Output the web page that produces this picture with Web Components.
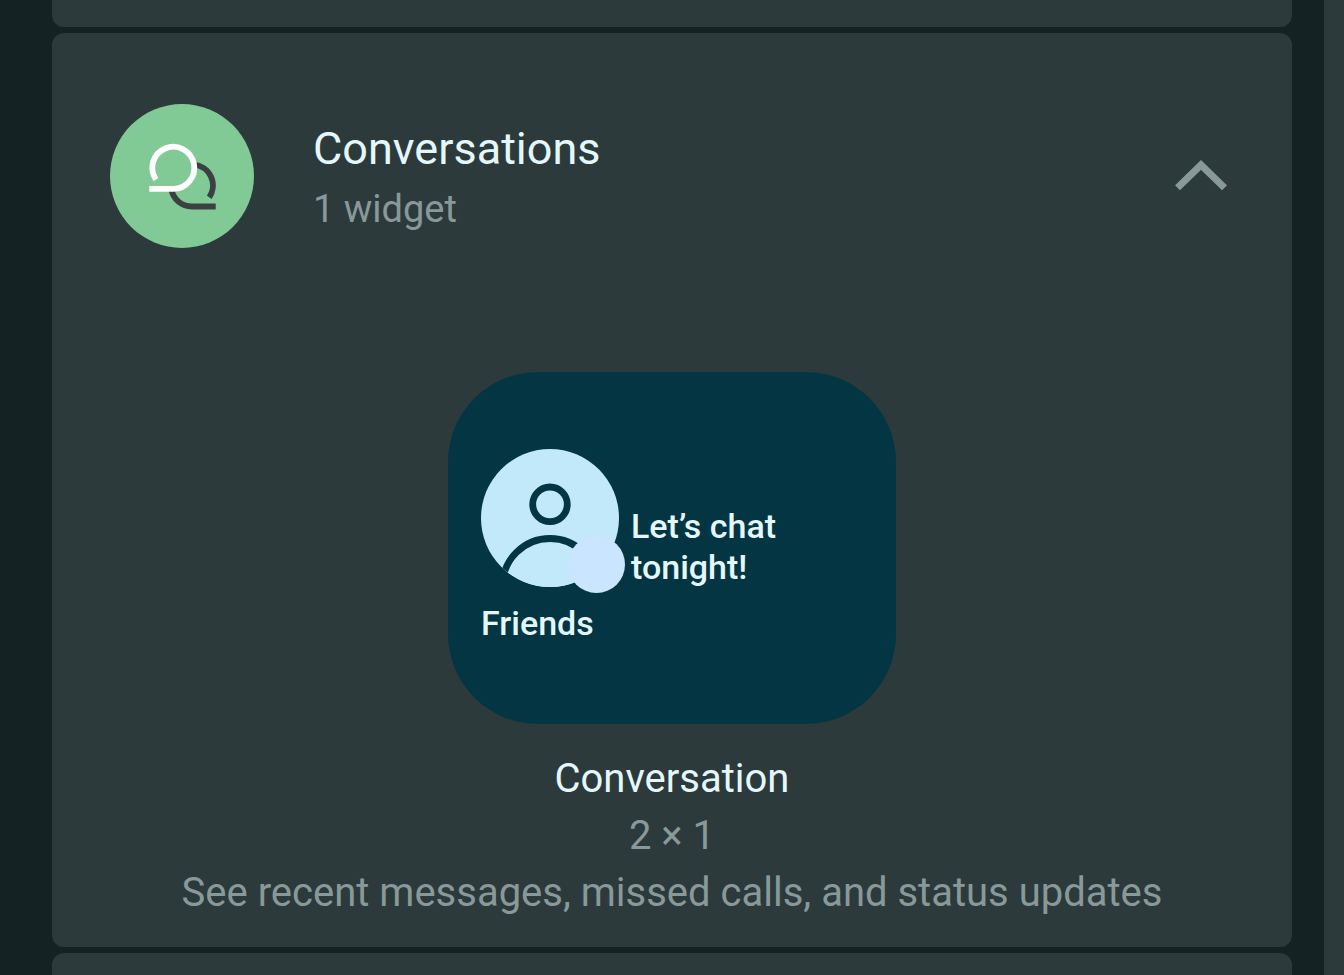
<!DOCTYPE html>
<html lang="en">
<head>
<meta charset="UTF-8">
<meta name="viewport" content="width=device-width, initial-scale=1">
<title>Widgets</title>
<style>
  :root {
    --page: #142224;
    --surface: #2d3a3c;
    --text: #e4f8fb;
    --muted: #879998;
    --widget: #043542;
  }
  body {
    margin: 0;
    background: var(--page);
    color: var(--text);
    font-family: Roboto, "Liberation Sans", sans-serif;
  }
</style>
</head>
<body>
<widget-picker>
  <app-card edge="bottom"></app-card>
  <app-card>
    <app-header name="Conversations" count="1 widget">
      <conversations-icon slot="icon"></conversations-icon>
    </app-header>
    <widget-option name="Conversation" size="2 × 1" description="See recent messages, missed calls, and status updates">
      <conversation-widget name="Friends">Let’s chat<br>tonight!</conversation-widget>
    </widget-option>
  </app-card>
  <app-card edge="top"></app-card>
</widget-picker>

<script>
class WidgetPicker extends HTMLElement {
  constructor() {
    super();
    this.attachShadow({ mode: 'open' });
    this.shadowRoot.innerHTML = `
      <style>
        :host {
          display: grid;
          grid-template-columns: 1fr 20px;
          min-height: 100vh;
        }
        main {
          display: flex;
          flex-direction: column;
          gap: 6px;
          padding: 0 32px 0 52px;
        }
        aside {
          background: var(--surface);
        }
      </style>
      <main><slot></slot></main>
      <aside></aside>
    `;
  }
}

class AppCard extends HTMLElement {
  constructor() {
    super();
    this.attachShadow({ mode: 'open' });
    this.shadowRoot.innerHTML = `
      <style>
        :host {
          display: block;
          box-sizing: border-box;
          padding: 71px 58px 26px;
          border-radius: 12px;
          background: var(--surface);
        }
        /* neighbours that are partly scrolled out of view */
        :host([edge]) {
          padding: 0;
        }
        :host([edge="bottom"]) {
          height: 27px;
          border-radius: 0 0 12px 12px;
        }
        :host([edge="top"]) {
          flex: 1;
          min-height: 20px;
          border-radius: 12px 12px 0 0;
        }
      </style>
      <slot></slot>
    `;
  }
}

class AppHeader extends HTMLElement {
  constructor() {
    super();
    this.attachShadow({ mode: 'open' });
  }

  connectedCallback() {
    this.shadowRoot.innerHTML = `
      <style>
        :host {
          display: flex;
          align-items: center;
          gap: 59px;
        }
        .titles {
          flex: 1;
          padding-top: 6px;
        }
        h2, p {
          margin: 0;
          font-weight: 400;
          line-height: 60px;
        }
        h2 {
          font-size: 45px;
        }
        p {
          color: var(--muted);
          font-size: 38px;
        }
        button {
          padding: 0;
          border: 0;
          background: none;
          color: var(--muted);
          cursor: pointer;
        }
        svg {
          display: block;
        }
      </style>
      <slot name="icon"></slot>
      <div class="titles">
        <h2>${this.getAttribute('name')}</h2>
        <p>${this.getAttribute('count')}</p>
      </div>
      <button type="button" aria-label="Collapse" aria-expanded="true">
        <svg width="66" height="66" viewBox="0 0 66 66" fill="none" stroke="currentColor" stroke-width="7">
          <path d="M9.5 44.8 33 22l23.5 22.8"/>
        </svg>
      </button>
    `;
  }
}

class ConversationsIcon extends HTMLElement {
  constructor() {
    super();
    this.attachShadow({ mode: 'open' });
    this.shadowRoot.innerHTML = `
      <style>
        :host {
          display: block;
        }
        svg {
          display: block;
        }
      </style>
      <svg width="144" height="144" viewBox="0 0 144 144" fill="none" stroke-width="5.8" aria-hidden="true">
        <circle cx="72" cy="72" r="72" fill="#81c995"/>
        <path stroke="#3c4043" d="M84 60.6A21 21 0 0 1 99.3 93.3M61.2 84.8A21 21 0 0 0 82 102.5H105.7"/>
        <path stroke="#fff" d="M39.3 84.8H63.3A21 21 0 1 0 46 75.7"/>
      </svg>
    `;
  }
}

class WidgetOption extends HTMLElement {
  constructor() {
    super();
    this.attachShadow({ mode: 'open' });
  }

  connectedCallback() {
    this.shadowRoot.innerHTML = `
      <style>
        :host {
          display: flex;
          flex-direction: column;
          align-items: center;
          padding-top: 124px;
          text-align: center;
        }
        .labels {
          margin-top: 26px;
        }
        h3, p {
          margin: 0;
          font-size: 40px;
          font-weight: 400;
          line-height: 57px;
        }
        p {
          color: var(--muted);
        }
      </style>
      <slot></slot>
      <div class="labels">
        <h3>${this.getAttribute('name')}</h3>
        <p>${this.getAttribute('size')}</p>
        <p>${this.getAttribute('description')}</p>
      </div>
    `;
  }
}

class ConversationWidget extends HTMLElement {
  constructor() {
    super();
    this.attachShadow({ mode: 'open' });
  }

  connectedCallback() {
    this.shadowRoot.innerHTML = `
      <style>
        :host {
          display: flex;
          flex-direction: column;
          gap: 10px;
          box-sizing: border-box;
          width: 448px;
          height: 352px;
          padding: 77px 33px;
          border-radius: 90px;
          background: var(--widget);
          font-size: 34px;
          font-weight: 500;
          line-height: 41px;
          text-align: left;
        }
        .row {
          display: flex;
          align-items: flex-end;
          gap: 6px;
        }
        .message {
          padding-bottom: 5px;
        }
        svg {
          display: block;
        }
      </style>
      <div class="row">
        <svg width="144" height="144" viewBox="0 0 144 144" aria-hidden="true">
          <clipPath id="face"><circle cx="69" cy="69" r="69"/></clipPath>
          <g clip-path="url(#face)" fill="#c1e9f9" stroke="#043542" stroke-width="6.8">
            <rect width="138" height="138" stroke="none"/>
            <circle cx="69" cy="55.3" r="17.3"/>
            <circle cx="69" cy="137" r="47.5"/>
          </g>
          <circle cx="115.5" cy="115.5" r="28.5" fill="#c9e5ff"/>
        </svg>
        <div class="message"><slot></slot></div>
      </div>
      <div>${this.getAttribute('name')}</div>
    `;
  }
}

customElements.define('widget-picker', WidgetPicker);
customElements.define('app-card', AppCard);
customElements.define('app-header', AppHeader);
customElements.define('conversations-icon', ConversationsIcon);
customElements.define('widget-option', WidgetOption);
customElements.define('conversation-widget', ConversationWidget);
</script>
</body>
</html>
